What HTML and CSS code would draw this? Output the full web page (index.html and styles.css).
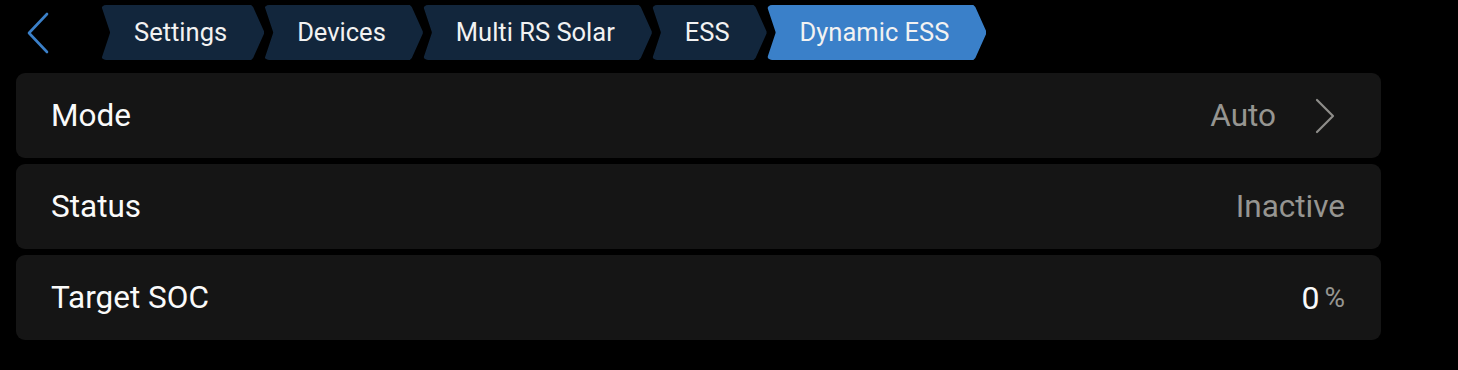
FILE: index.html
```html
<!DOCTYPE html>
<html lang="en">
<head>
    <meta charset="UTF-8">
    <title>Dynamic ESS</title>
    <link rel="stylesheet" href="styles.css">
</head>
<body>
    <div class="header">
        <button class="back-btn">
            <svg width="24" height="42" viewBox="0 0 24 42">
                <path d="M21 2 L3 21 L21 40" fill="none" stroke="#3b80c9" stroke-width="2.6" stroke-linecap="round" stroke-linejoin="round"/>
            </svg>
        </button>
        <div class="crumbs">
            <div class="crumb">Settings</div>
            <div class="crumb">Devices</div>
            <div class="crumb">Multi RS Solar</div>
            <div class="crumb">ESS</div>
            <div class="crumb active">Dynamic ESS</div>
        </div>
    </div>

    <div class="list">
        <div class="row">
            <div class="label">Mode</div>
            <div class="value">
                Auto
                <svg class="chevron" width="20" height="36" viewBox="0 0 20 36">
                    <path d="M2 2 L18 18 L2 34" fill="none" stroke="#8e8d8a" stroke-width="2.2" stroke-linecap="round" stroke-linejoin="round"/>
                </svg>
            </div>
        </div>
        <div class="row">
            <div class="label">Status</div>
            <div class="value">Inactive</div>
        </div>
        <div class="row">
            <div class="label">Target SOC</div>
            <div class="value"><span class="num">0</span><span class="unit">%</span></div>
        </div>
    </div>
</body>
</html>
```

FILE: styles.css
```css
* {
    margin: 0;
    padding: 0;
    box-sizing: border-box;
}

body {
    font-family: Roboto, "Liberation Sans", sans-serif;
    background: #000;
    color: #fafafa;
    width: 1458px;
    height: 370px;
    overflow: hidden;
}

.header {
    display: flex;
    align-items: flex-start;
    height: 73px;
    padding-top: 5px;
}

.back-btn {
    background: none;
    border: none;
    width: 101px;
    height: 55px;
    padding-left: 26px;
    display: flex;
    align-items: center;
}

.crumbs {
    display: flex;
}

.crumb {
    height: 55px;
    display: flex;
    align-items: center;
    padding: 0 37px 1px 33px;
    font-size: 25.5px;
    color: #f2f2f2;
    background: #12263c;
    border-radius: 5px;
    clip-path: polygon(0 0, calc(100% - 13px) 0, calc(100% - 11px) 2px, 100% 48%, 100% 52%, calc(100% - 11px) calc(100% - 2px), calc(100% - 13px) 100%, 0 100%, 9px 51%, 9px 49%);
}

.crumb.active {
    background: #3a80c9;
}

.list {
    display: flex;
    flex-direction: column;
    gap: 6px;
    padding-left: 16px;
    width: 1381px;
}

.row {
    height: 85px;
    background: #151515;
    border-radius: 9px;
    display: flex;
    align-items: center;
    justify-content: space-between;
    padding: 0 36px 0 35px;
}

.label {
    font-size: 31.5px;
    color: #fafafa;
}

.value {
    font-size: 31.5px;
    color: #969591;
    display: flex;
    align-items: center;
}

.chevron {
    margin-left: 39px;
    margin-right: 10px;
}

.num {
    color: #fafafa;
    font-size: 32px;
}

.unit {
    font-size: 28px;
    margin-left: 5px;
    color: #969591;
}
```
